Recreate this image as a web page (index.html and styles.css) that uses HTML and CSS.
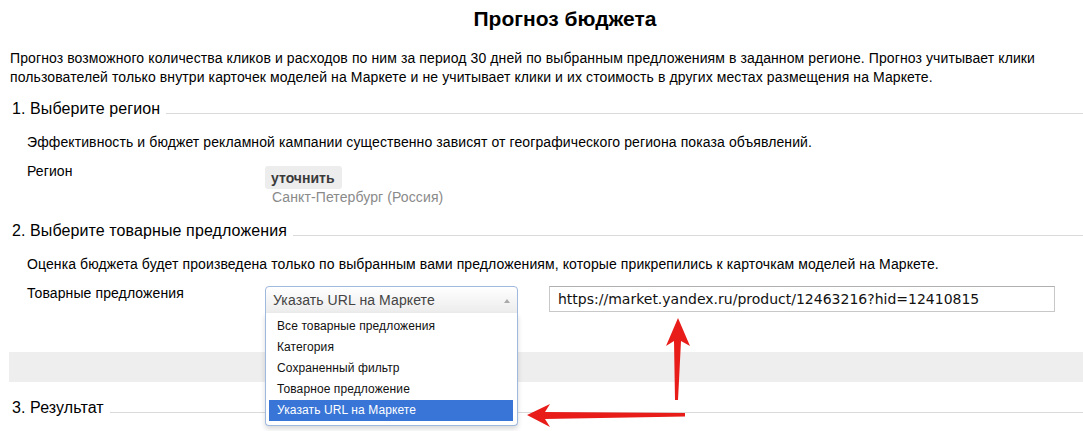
FILE: index.html
```html
<!DOCTYPE html>
<html lang="ru">
<head>
    <meta charset="UTF-8">
    <meta name="viewport" content="width=device-width, initial-scale=1.0">
    <title>Прогноз бюджета</title>
    <link rel="stylesheet" href="styles.css">
</head>
<body>

    <div class="page">
        <h1 class="title">Прогноз бюджета</h1>
        <p class="intro">Прогноз возможного количества кликов и расходов по ним за период 30 дней по выбранным предложениям в заданном регионе. Прогноз учитывает клики пользователей только внутри карточек моделей на Маркете и не учитывает клики и их стоимость в других местах размещения на Маркете.</p>

        <!-- Step 1 -->
        <h2 class="step-title">1. Выберите регион</h2>
        <div class="step-body">
            <p class="hint">Эффективность и бюджет рекламной кампании существенно зависят от географического региона показа объявлений.</p>
            <div class="field">
                <div class="field-label">Регион</div>
                <div class="field-value region">
                    <button class="btn">уточнить</button>
                    <div class="region-name">Санкт-Петербург (Россия)</div>
                </div>
            </div>
        </div>

        <!-- Step 2 -->
        <h2 class="step-title step-2">2. Выберите товарные предложения</h2>
        <div class="step-body">
            <p class="hint">Оценка бюджета будет произведена только по выбранным вами предложениям, которые прикрепились к карточкам моделей на Маркете.</p>
            <div class="field">
                <div class="field-label">Товарные предложения</div>
                <div class="field-value offers">
                    <div class="select">
                        <div class="select-head">Указать URL на Маркете</div>
                        <ul class="select-list">
                            <li>Все товарные предложения</li>
                            <li>Категория</li>
                            <li>Сохраненный фильтр</li>
                            <li>Товарное предложение</li>
                            <li class="active">Указать URL на Маркете</li>
                        </ul>
                    </div>
                    <input class="url-input" type="text" value="https://market.yandex.ru/product/12463216?hid=12410815">
                </div>
            </div>
        </div>

        <div class="band"></div>

        <!-- Step 3 -->
        <h2 class="step-title step-3">3. Результат</h2>

        <!-- annotation arrows -->
        <svg class="arrows" width="1083" height="431" viewBox="0 0 1083 431">
            <polygon points="678,311 690,339 681,334 678,393 675,393 674,334 666,339" fill="#e81d1a"/>
            <polygon points="527,408 550,397 545,405 685,406 685,409.5 545,412 550,420" fill="#e81d1a"/>
        </svg>
    </div>

</body>
</html>
```

FILE: styles.css
```css
body {
    margin: 0;
    font-family: "Liberation Sans", Arial, sans-serif;
    font-size: 14px;
    letter-spacing: 0.1px;
    color: #000;
    background: #fff;
    overflow: hidden;
}
.page {
    position: relative;
    width: 1120px;
    box-sizing: border-box;
    padding: 0 0 20px 10px;
}
.title {
    margin: 7px 0 0;
    font-size: 21px;
    line-height: 24px;
    letter-spacing: 0;
    text-align: center;
}
.intro {
    margin: 18px 0 0;
    line-height: 19px;
}

/* Steps */
.step-title {
    display: flex;
    align-items: baseline;
    margin: 12px 0 0;
    padding-left: 2px;
    font-size: 16px;
    font-weight: normal;
    line-height: 20px;
}
.step-title::after {
    content: "";
    flex: 1;
    margin-left: 6px;
    border-bottom: 1px solid #dadada;
}
.step-2 {
    margin-top: 15px;
}
.step-3 {
    margin-top: 16px;
}
.step-body {
    padding-left: 17px;
}
.hint {
    margin: 14px 0 0;
    line-height: 19px;
}
.field {
    display: flex;
    margin-top: 10px;
    line-height: 19px;
}
.field-label {
    width: 238px;
    flex-shrink: 0;
}
.region {
    padding-top: 4px;
}
.btn {
    display: block;
    height: 23px;
    padding: 0 7px 0 6px;
    border: none;
    border-radius: 3px;
    background: #ededed;
    font-family: "Liberation Sans", Arial, sans-serif;
    font-size: 14px;
    font-weight: bold;
    color: #3a3a3a;
}
.region-name {
    padding-left: 7px;
    line-height: 17px;
    color: #8a8a8a;
}

/* Offers select */
.offers {
    display: flex;
    gap: 31px;
    padding-top: 2px;
}
.select {
    position: relative;
    width: 253px;
}
.select-head {
    position: relative;
    height: 26px;
    padding-left: 7px;
    border: 1px solid #9fb8dd;
    border-radius: 4px 4px 0 0;
    background: linear-gradient(#ffffff, #ececec);
    font-size: 14px;
    line-height: 27px;
    color: #444;
}
.select-head::after {
    content: "";
    position: absolute;
    right: 7px;
    top: 12px;
    border-left: 3px solid transparent;
    border-right: 3px solid transparent;
    border-bottom: 4px solid #aaa;
}
.select-list {
    position: absolute;
    left: 0;
    right: 0;
    top: 27px;
    z-index: 2;
    margin: 0;
    padding: 3px 4px 4px 3px;
    list-style: none;
    background: #fff;
    border: 1px solid #9fb8dd;
    border-top: none;
    border-radius: 0 0 4px 4px;
    box-shadow: 0 3px 5px rgba(0, 0, 0, 0.15);
}
.select-list li {
    padding-left: 8px;
    font-size: 12px;
    line-height: 21px;
    color: #111;
}
.select-list li.active {
    background: #3875d7;
    color: #fff;
}
.url-input {
    box-sizing: border-box;
    width: 506px;
    height: 26px;
    padding: 0 8px;
    border: 1px solid #c8c8c8;
    border-top-color: #b0b0b0;
    font-family: "DejaVu Sans", Verdana, sans-serif;
    font-size: 14px;
    letter-spacing: 0;
    color: #111;
}

/* Gray band */
.band {
    height: 30px;
    margin: 38px 0 0 -1px;
    background: #eeeeee;
}

/* Annotation arrows */
.arrows {
    position: absolute;
    left: 0;
    top: 0;
    z-index: 3;
    pointer-events: none;
}
```
